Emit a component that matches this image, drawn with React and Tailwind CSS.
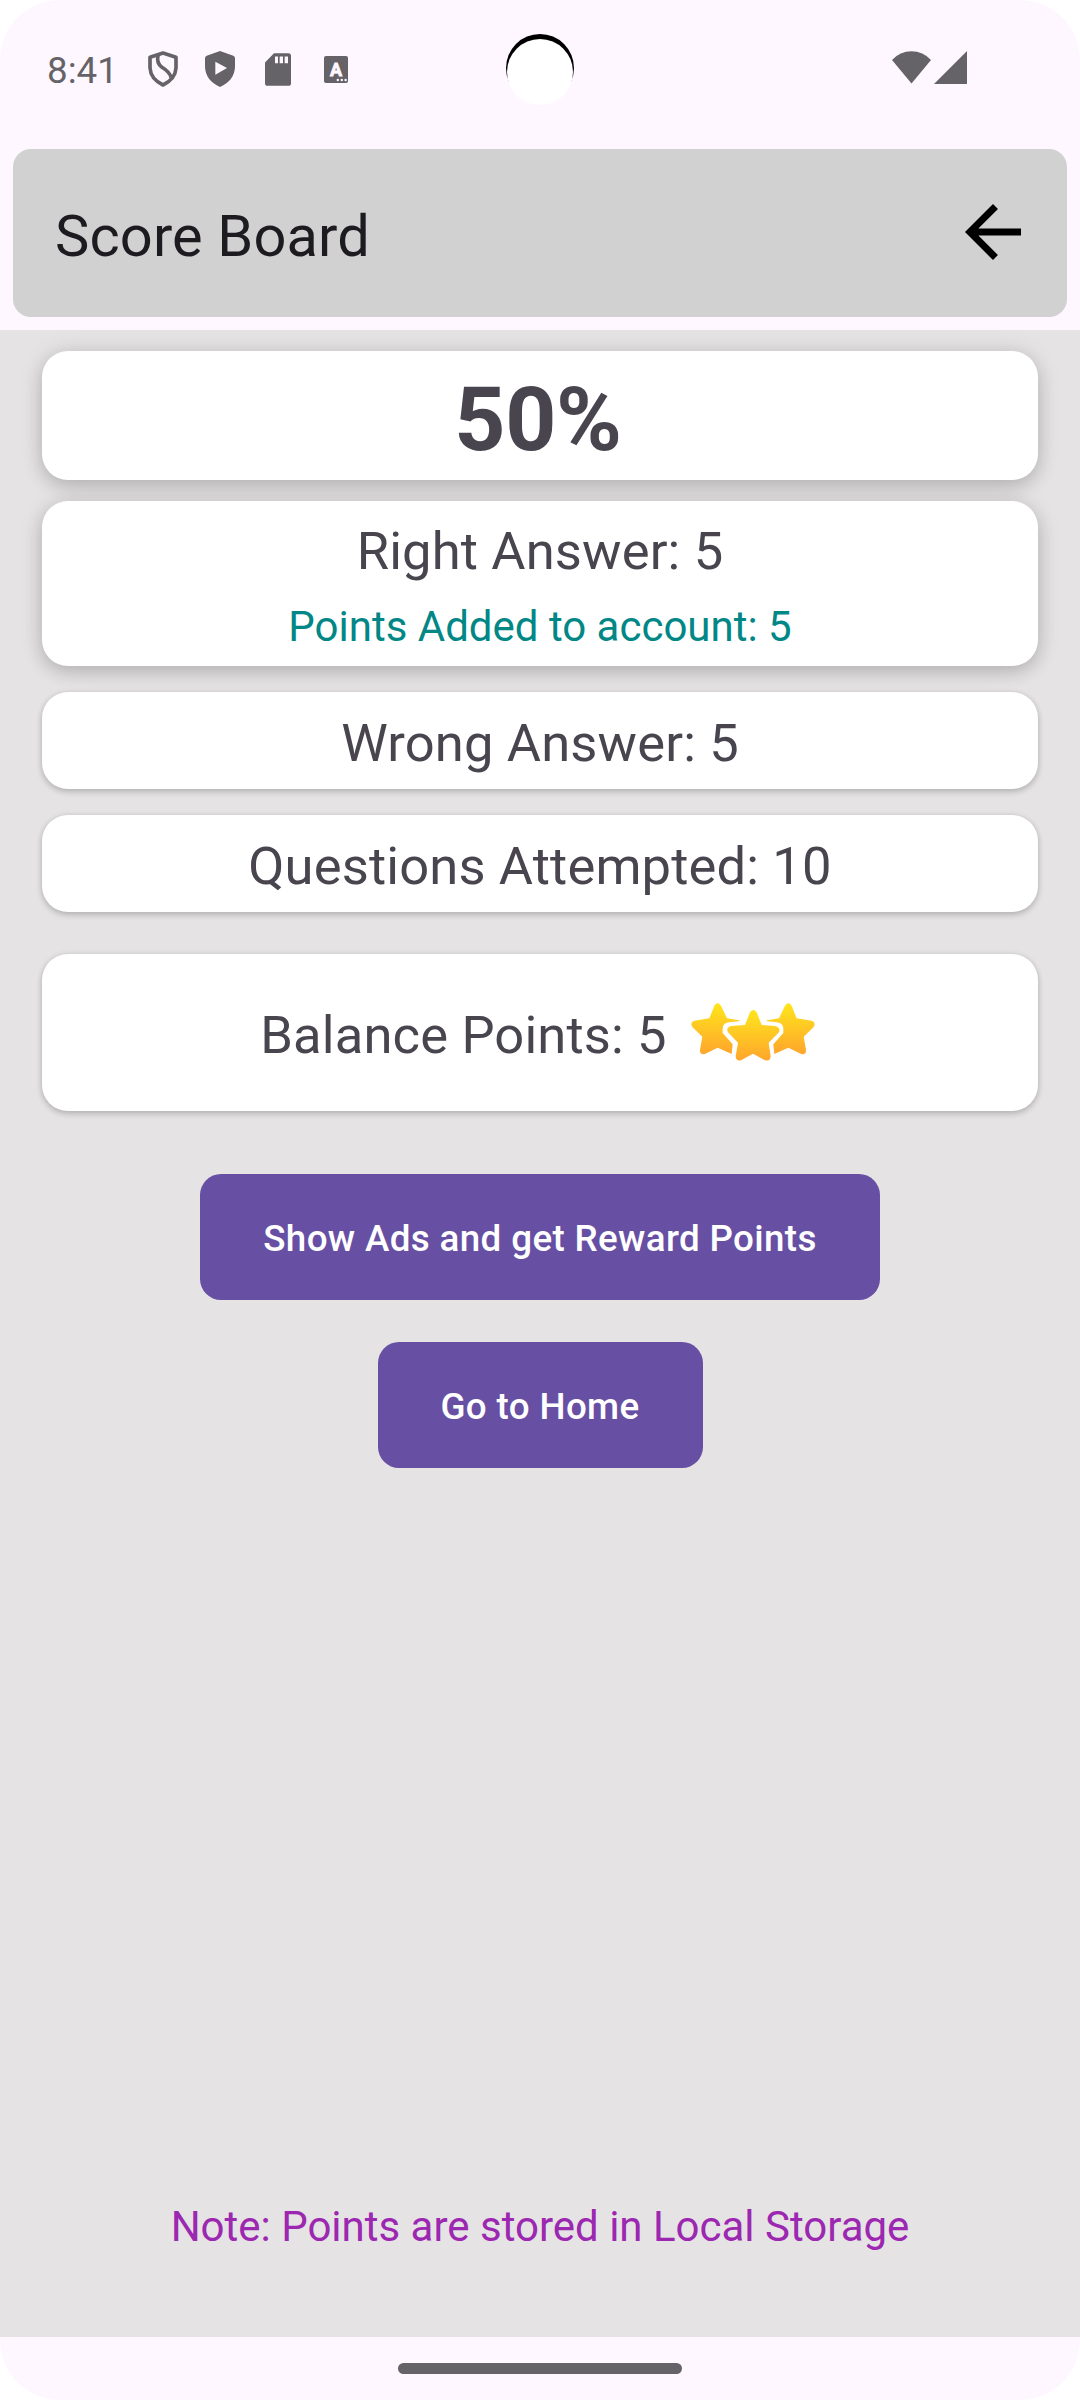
import clsx from "clsx";

const results = {
  percent: 50,
  right: 5,
  wrong: 5,
  attempted: 10,
  balance: 5,
};

function StatusBar() {
  return (
    <div className="relative flex h-[138px] w-full items-center pl-[47px] text-[#656367]">
      <span className="w-[101px] pt-[4px] text-[36.75px] leading-none">8:41</span>

      {/* Notification icons */}
      <svg className="h-[36px] w-[30px]" viewBox="442 154 90 108" fill="none" stroke="currentColor" strokeWidth="11" strokeLinejoin="round">
        <path d="M487 160 L526 173 V205 Q524 238 487 256 Q450 238 448 205 V173 Z" />
        <path d="M472 168 Q467 190 483 202 Q509 218 511 234" />
      </svg>
      <svg className="ml-[27px] h-[36px] w-[30px]" viewBox="615 153 90 108" fill="currentColor">
        <path fillRule="evenodd" d="M660 153 L700 167 Q705 169 705 175 V202 Q703 242 660 261 Q617 242 615 202 V175 Q615 169 620 167 Z M646 185 V224 L681 204 Z" />
      </svg>
      <svg className="ml-[30px] h-[33px] w-[26px]" viewBox="795 158 78 98" fill="currentColor">
        <path fillRule="evenodd" d="M822 158 H865 Q873 158 873 166 V248 Q873 256 865 256 H803 Q795 256 795 248 V186 Z M825 168 V188 H834 V168 Z M839 168 V188 H849 V168 Z M854 168 V188 H864 V168 Z" />
      </svg>
      <svg className="ml-[33px] h-[27px] w-[24px]" viewBox="0 0 24 27">
        <rect width="24" height="27" rx="2" fill="currentColor" />
        <text x="12" y="20" textAnchor="middle" fill="#fef7ff" stroke="#fef7ff" strokeWidth="0.8" className="font-[Roboto] text-[18px] font-bold">
          A
        </text>
        <g fill="#fef7ff">
          <circle cx="13.8" cy="24" r="1.2" />
          <circle cx="17.8" cy="24" r="1.2" />
          <circle cx="21.6" cy="24" r="1.2" />
        </g>
      </svg>

      {/* Wifi and signal */}
      <div className="mr-[113px] mb-[3px] ml-auto flex gap-[3px]">
        <svg className="h-[33px] w-[39px]" viewBox="0 0 39 33" fill="currentColor">
          <path d="M19.5 32.5 L0 9 Q8 0.3 19.5 0.3 Q31 0.3 39 9 Z" />
        </svg>
        <svg className="h-[33px] w-[33px]" viewBox="0 0 33 33" fill="currentColor">
          <path d="M33 0 V33 H0 Z" />
        </svg>
      </div>

      {/* Camera cutout */}
      <div className="absolute top-[34px] left-[506px] size-[68px] rounded-full bg-[linear-gradient(to_bottom,#000_60%,transparent_82%)]">
        <div className="ml-[1px] mt-[5px] size-[65.5px] rounded-full bg-white" />
      </div>
    </div>
  );
}

function Header() {
  return (
    <header className="mx-[13px] mt-[11px] flex h-[168px] items-center justify-between rounded-[18px] bg-[#d1d1d1] pr-[32px] pl-[42px]">
      <h1 className="pt-[7px] text-[57.75px] leading-none tracking-[0.15px] text-[#1d1b20]">Score Board</h1>
      <button type="button" aria-label="Back" className="mb-[2px]">
        <svg className="size-[84px]" viewBox="0 0 24 24">
          <path d="M20 11H7.83l5.59-5.59L12 4l-8 8 8 8 1.41-1.41L7.83 13H20v-2z" />
        </svg>
      </button>
    </header>
  );
}

function Card({ raised, className, children }) {
  return (
    <div
      className={clsx(
        "flex w-full items-center justify-center rounded-[26px] bg-white text-[52.5px] leading-none tracking-[0.15px] text-[#49454f]",
        raised
          ? "shadow-[0_6px_18px_rgba(0,0,0,0.18),0_0_28px_rgba(0,0,0,0.07)]"
          : "shadow-[0_3px_6px_rgba(0,0,0,0.18),0_0_6px_rgba(0,0,0,0.08)]",
        className
      )}
    >
      {children}
    </div>
  );
}

function Stars() {
  const side =
    "M134 76 Q144 62 154 76 L172 114 L208 120 Q212 122 206 123 L178 126 Q160 128 159 144 L159 158 L189 192 L186 221 L144 202 L107 220 Q90 226 91 208 L98 169 L68 140 Q60 126 74 121 L119 114 Z";
  return (
    <svg className="mb-[1px] h-[58px] w-[124px]" viewBox="64 68 372 174">
      <defs>
        <linearGradient id="side" x1="0" y1="68" x2="0" y2="222" gradientUnits="userSpaceOnUse">
          <stop stopColor="#fee61c" />
          <stop offset="1" stopColor="#ffa52c" />
        </linearGradient>
        <linearGradient id="center" x1="0" y1="88" x2="0" y2="242" gradientUnits="userSpaceOnUse">
          <stop stopColor="#fee61c" />
          <stop offset="1" stopColor="#ffa52c" />
        </linearGradient>
      </defs>
      <path d={side} fill="url(#side)" />
      <path d={side} fill="url(#side)" transform="translate(500 0) scale(-1 1)" />
      <path
        d="M241 96 Q251 82 261 96 L276 134 L316 137 Q334 142 328 156 L297 187 L303 228 Q302 244 286 240 L250 220 L214 240 Q199 244 198 228 L205 187 L175 156 Q168 142 184 137 L226 134 Z"
        fill="url(#center)"
      />
    </svg>
  );
}

function ActionButton({ className, children }) {
  return (
    <button
      type="button"
      className={clsx(
        "flex h-[126px] items-center justify-center rounded-[21px] bg-[#6750a4] pt-[4px] text-[36.75px] leading-none font-medium tracking-[0.01em] text-white",
        className
      )}
    >
      {children}
    </button>
  );
}

export default function App() {
  return (
    <div className="h-[2400px] w-[1080px] bg-white">
      <div className="flex h-full w-full flex-col overflow-hidden rounded-[60px] bg-[#fef7ff] font-[Roboto,sans-serif]">
        <StatusBar />
        <Header />

        <main className="mt-[13px] flex h-[2007px] flex-col items-center overflow-hidden bg-[#e5e3e4] px-[42px] pt-[21px]">
          <Card raised className="h-[129px]">
            <span className="pt-[8px] pr-[4px] text-[89.25px] font-bold tracking-[-0.3px]">{results.percent}%</span>
          </Card>
          <Card raised className="mt-[21px] h-[165px] flex-col gap-[28px] pt-[6px]">
            <p>Right Answer: {results.right}</p>
            <p className="text-[42px] tracking-normal text-[#018786]">
              Points Added to account: {results.right}
            </p>
          </Card>
          <Card className="mt-[26px] h-[97px] pt-[5px]">Wrong Answer: {results.wrong}</Card>
          <Card className="mt-[26px] h-[97px] pt-[5px]">
            Questions Attempted: {results.attempted}
          </Card>
          <Card className="mt-[42px] h-[157px] gap-[24px] pr-[5px]">
            <span className="pt-[5px]">Balance Points: {results.balance}</span>
            <Stars />
          </Card>

          <ActionButton className="mt-[63px] w-[680px]">
            Show Ads and get Reward Points
          </ActionButton>
          <ActionButton className="mt-[42px] w-[325px]">Go to Home</ActionButton>

          <p className="mt-auto mb-[89px] text-[42px] leading-none text-[#9c27b0]">
            Note: Points are stored in Local Storage
          </p>
        </main>

        {/* Gesture bar */}
        <div className="flex flex-1 justify-center pt-[26px]">
          <div className="h-[11px] w-[284px] rounded-full bg-[#656367]" />
        </div>
      </div>
    </div>
  );
}
